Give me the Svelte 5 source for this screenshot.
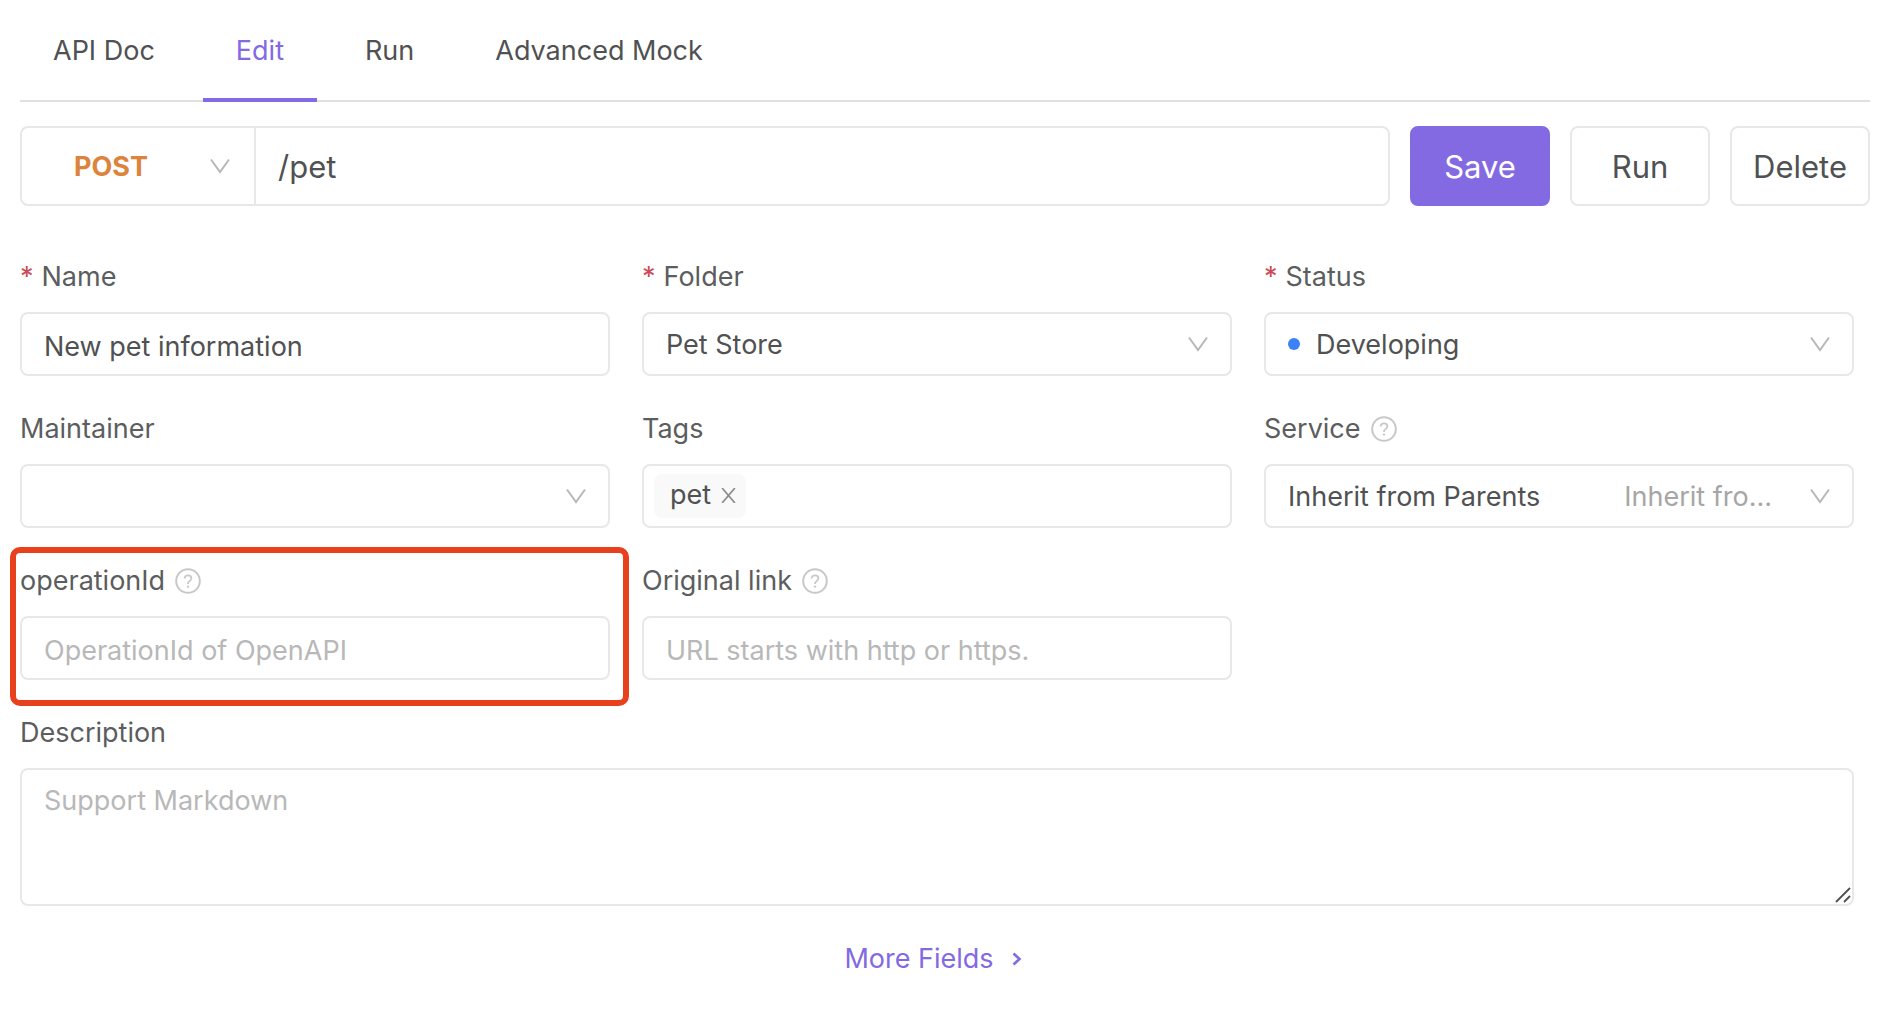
<script>
  const tabs = ['API Doc', 'Edit', 'Run', 'Advanced Mock'];
  let activeTab = $state('Edit');
  let method = $state('POST');
  let path = $state('/pet');
  let name = $state('New pet information');
  let tags = $state(['pet']);
</script>

{#snippet chevron()}
  <svg class="chevron" viewBox="0 0 20 16" aria-hidden="true">
    <path d="M1 1.5 10 14 19 1.5" fill="none" stroke="currentColor" stroke-width="2" />
  </svg>
{/snippet}

{#snippet help(text)}
  <button type="button" class="help" aria-label={text}>
    <svg viewBox="0 0 26 26" aria-hidden="true">
      <circle cx="13" cy="13" r="11.8" fill="none" stroke="currentColor" stroke-width="2" />
      <path d="M9.6 10.6c0-2 1.500-3.300 3.400-3.300s3.400 1.200 3.400 3c0 1.400-.8 2.200-1.900 2.900-1.100.7-1.500 1.200-1.500 2.300v.6" fill="none" stroke="currentColor" stroke-width="1.800" />
      <circle cx="13" cy="18.600" r="1.200" fill="currentColor" />
    </svg>
  </button>
{/snippet}

<main>
  <div class="tabs" role="tablist">
    {#each tabs as tab}
      <button type="button" role="tab" class="tab" class:active={tab === activeTab} aria-selected={tab === activeTab} onclick={() => (activeTab = tab)}>{tab}</button>
    {/each}
  </div>

  <form onsubmit={(e) => e.preventDefault()}>
    <div class="request">
      <div class="endpoint">
        <div class="method">
          <select aria-label="Method" bind:value={method}>
            <option>POST</option>
            <option>GET</option>
            <option>PUT</option>
            <option>DELETE</option>
          </select>
          {@render chevron()}
        </div>
        <input class="path" aria-label="Path" bind:value={path} />
      </div>
      <button type="submit" class="action primary">Save</button>
      <button type="button" class="action">Run</button>
      <button type="button" class="action">Delete</button>
    </div>

    <div class="fields">
      <div class="field">
        <div class="label"><span class="star">*</span><label for="name">Name</label></div>
        <input id="name" class="control" required bind:value={name} />
      </div>

      <div class="field">
        <div class="label"><span class="star">*</span><label for="folder">Folder</label></div>
        <div class="picker">
          <select id="folder" class="control"><option>Pet Store</option></select>
          {@render chevron()}
        </div>
      </div>

      <div class="field">
        <div class="label"><span class="star">*</span><label for="status">Status</label></div>
        <div class="picker">
          <span class="dot"></span>
          <select id="status" class="control with-dot"><option>Developing</option></select>
          {@render chevron()}
        </div>
      </div>

      <div class="field">
        <div class="label"><label for="maintainer">Maintainer</label></div>
        <div class="picker">
          <select id="maintainer" class="control"><option value=""></option></select>
          {@render chevron()}
        </div>
      </div>

      <div class="field">
        <div class="label"><label for="tags">Tags</label></div>
        <div class="control tag-box">
          {#each tags as tag}
            <span class="tag">
              {tag}
              <button type="button" aria-label="Remove {tag}" onclick={() => (tags = tags.filter((t) => t !== tag))}>
                <svg viewBox="0 0 14 14" aria-hidden="true"><path d="M1 0 13 14M13 0 1 14" fill="none" stroke="currentColor" stroke-width="1.600" /></svg>
              </button>
            </span>
          {/each}
          <input id="tags" />
        </div>
      </div>

      <div class="field">
        <div class="label"><label for="service">Service</label>{@render help('About service')}</div>
        <div class="picker">
          <select id="service" class="control"><option>Inherit from Parents</option></select>
          <span class="hint">Inherit fro...</span>
          {@render chevron()}
        </div>
      </div>

      <div class="field highlighted">
        <div class="label"><label for="operation">operationId</label>{@render help('About operationId')}</div>
        <input id="operation" class="control" placeholder="OperationId of OpenAPI" />
      </div>

      <div class="field">
        <div class="label"><label for="link">Original link</label>{@render help('About original link')}</div>
        <input id="link" class="control" placeholder="URL starts with http or https." />
      </div>

      <div class="field wide">
        <div class="label"><label for="description">Description</label></div>
        <div class="editor">
          <textarea id="description" placeholder="Support Markdown"></textarea>
          <svg class="grip" viewBox="0 0 16 16" aria-hidden="true"><path d="M1 15 15 1M9 15l6-6" fill="none" stroke="currentColor" stroke-width="1.800" /></svg>
        </div>
      </div>
    </div>

    <div class="more">
      <button type="button">
        More Fields
        <svg viewBox="0 0 10 14" aria-hidden="true"><path d="M1.500 1.500 7.500 7l-6 5.500" fill="none" stroke="currentColor" stroke-width="2.600" /></svg>
      </button>
    </div>
  </form>
</main>

<style>
  :global(body) {
    background: #fff;
  }

  main {
    padding: 0 14px 24px 20px;
    color: #505152;
    font: 27px/44px Inter, sans-serif;
  }

  main, main * {
    box-sizing: border-box;
  }

  button, input, select, textarea {
    margin: 0;
    padding: 0;
    border: 0;
    background: none;
    color: inherit;
    font: inherit;
    outline: none;
  }

  button {
    cursor: pointer;
  }

  select {
    appearance: none;
  }

  svg {
    display: block;
  }

  .tabs {
    display: flex;
    gap: 15px;
    border-bottom: 2px solid #e0e0e0;
  }

  .tab {
    position: relative;
    height: 100px;
    padding: 2px 33px 0;
  }

  .tab.active {
    color: #836ae3;
  }

  .tab.active::after {
    content: '';
    position: absolute;
    right: 0;
    bottom: -2px;
    left: 0;
    height: 4px;
    background: #836ae3;
  }

  .request {
    display: flex;
    gap: 20px;
    margin-top: 24px;
    font-size: 31px;
  }

  .endpoint {
    display: flex;
    flex: 1;
    height: 80px;
    border: 2px solid #e8e8e8;
    border-radius: 8px;
  }

  .method {
    position: relative;
    width: 234px;
    border-right: 2px solid #e8e8e8;
    color: #dc843c;
    font-size: 27px;
    font-weight: 700;
  }

  .method select {
    width: 100%;
    height: 100%;
    padding: 2px 0 0 52px;
  }

  .path {
    flex: 1;
    min-width: 0;
    padding: 2px 22px 0;
  }

  .chevron {
    position: absolute;
    top: 50%;
    right: 24px;
    width: 20px;
    height: 16px;
    margin-top: -8px;
    color: #b8b8b8;
    pointer-events: none;
  }

  .action {
    width: 140px;
    height: 80px;
    padding-top: 2px;
    border: 2px solid #e8e8e8;
    border-radius: 8px;
  }

  .action.primary {
    border-color: #836ae3;
    background: #836ae3;
    color: #fff;
  }

  .fields {
    display: grid;
    grid-template-columns: repeat(3, minmax(0, 1fr));
    gap: 24px 32px;
    margin-top: 42px;
    padding-right: 16px;
  }

  .wide {
    grid-column: 1 / -1;
  }

  .label {
    display: flex;
    align-items: center;
    height: 56px;
    margin-bottom: 8px;
    padding-top: 2px;
    color: #5c5d5e;
  }

  .star {
    margin-right: 8px;
    color: #cc4a55;
  }

  .help {
    margin-left: 10px;
    color: #c8c8c8;
  }

  .help svg {
    width: 26px;
    height: 26px;
  }

  .control {
    display: block;
    width: 100%;
    height: 64px;
    padding: 2px 22px 0;
    border: 2px solid #e8e8e8;
    border-radius: 8px;
  }

  input.control {
    padding-top: 4px;
  }

  .control.with-dot {
    padding-left: 50px;
  }

  ::placeholder {
    color: #b8b8b8;
    opacity: 1;
  }

  .picker {
    position: relative;
  }

  .dot {
    position: absolute;
    top: 26px;
    left: 24px;
    width: 12px;
    height: 12px;
    border-radius: 50%;
    background: #3b82f6;
  }

  .hint {
    position: absolute;
    top: 11px;
    right: 82px;
    color: #a6a6a6;
    white-space: nowrap;
    pointer-events: none;
  }

  .control.tag-box {
    display: flex;
    align-items: center;
    gap: 8px;
    padding: 0 10px;
  }

  .tag-box input {
    flex: 1;
    min-width: 0;
  }

  .tag {
    display: flex;
    align-items: center;
    gap: 10px;
    height: 44px;
    padding: 0 10px 2px 16px;
    border-radius: 8px;
    background: #f9f9f9;
  }

  .tag button {
    color: #8c8c8c;
  }

  .tag svg {
    width: 15px;
    height: 15px;
  }

  .highlighted {
    position: relative;
  }

  .highlighted::after {
    content: '';
    position: absolute;
    inset: -5px -19px -26px -10px;
    border: 6px solid #e83f1d;
    border-radius: 10px;
    pointer-events: none;
  }

  .editor {
    position: relative;
  }

  textarea {
    display: block;
    width: 100%;
    height: 138px;
    padding: 9px 22px;
    border: 2px solid #e8e8e8;
    border-radius: 8px;
    resize: none;
  }

  .grip {
    position: absolute;
    right: 3px;
    bottom: 3px;
    width: 16px;
    height: 16px;
    color: #505152;
  }

  .more {
    display: flex;
    justify-content: center;
    margin-top: 31px;
    padding-right: 24px;
    color: #836ae3;
  }

  .more button {
    display: flex;
    align-items: center;
    gap: 18px;
  }

  .more svg {
    width: 10px;
    height: 14px;
  }
</style>
